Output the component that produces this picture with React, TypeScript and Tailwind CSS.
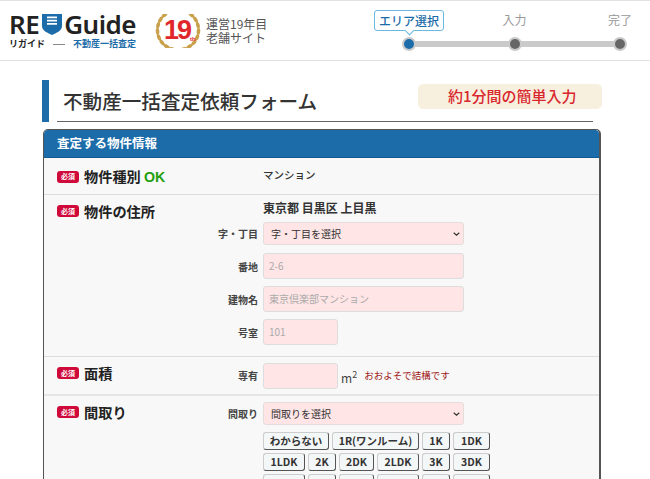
import React from "react";

const FONT = "font-['Noto_Sans_CJK_JP','Noto_Sans',sans-serif]";

const Badge = () => (
  <span className="flex items-center justify-center w-[22px] h-[12px] rounded-[3px] bg-[#cf0a3a] text-white text-[7px] leading-none font-bold shrink-0">
    必須
  </span>
);

const Label = ({ children }: { children: React.ReactNode }) => (
  <div className="flex items-center gap-[5px]">
    <Badge />
    <span className="text-[14.2px] leading-[20px] font-bold text-[#222]">{children}</span>
  </div>
);

const SubLabel = ({ children }: { children: React.ReactNode }) => (
  <div className="w-[219px] pr-[5px] text-right text-[10px] font-bold text-[#444] shrink-0">{children}</div>
);

const Chevron = () => (
  <svg width="7" height="4" viewBox="0 0 7 4" className="absolute right-[3px] top-[9px]">
    <path d="M.7.7l2.8 2.4L6.300.7" fill="none" stroke="#333" strokeWidth="1.2" />
  </svg>
);

const SelectBox = ({ text }: { text: string }) => (
  <div className="relative w-[201px] h-[23px] rounded-[3px] border border-[#e5dcdc] bg-[#ffe5e5] pl-[7px] text-[10px] leading-[21px] text-[#333]">
    {text}
    <Chevron />
  </div>
);

const TextBox = ({ text, wide }: { text?: string; wide?: boolean }) => (
  <div
    className={`${wide ? "w-[201px]" : "w-[75px]"} h-[26px] rounded-[3px] border border-[#ddd] bg-[#ffe5e5] pl-[5px] text-[10px] leading-[24px] text-[#aaa]`}
  >
    {text}
  </div>
);

const Pick = ({ children, className }: { children: React.ReactNode; className: string }) => (
  <div
    className={`${className} h-[18px] text-center rounded-[3px] border border-[#ccc] border-r-[#555] border-b-[#555] bg-[#f3f7f7] text-[10.5px] leading-[16px] font-bold text-[#333] whitespace-nowrap`}
  >
    {children}
  </div>
);

const Step = ({ label, active }: { label: string; active?: boolean }) => (
  <div className="relative flex flex-col items-center w-[14px]">
    {active ? (
      <div className="absolute bottom-[20px] h-[21px] px-[4px] rounded-[3px] border border-[#6cb8e0] bg-white text-[12px] leading-[19px] font-medium text-[#1b6ca8] whitespace-nowrap">
        {label}
        <span className="absolute left-1/2 -bottom-[4px] -ml-[3px] w-[7px] h-[7px] rotate-45 border-r border-b border-[#6cb8e0] bg-white" />
      </div>
    ) : (
      <div className="absolute bottom-[23px] text-[12px] leading-[16px] text-[#999] whitespace-nowrap">{label}</div>
    )}
    <div
      className={`w-[14px] h-[14px] rounded-full border-[2px] border-[#cacaca] ${active ? "bg-[#1b6ca8]" : "bg-[#666]"}`}
    />
  </div>
);

const leaves = [130, 148, 166, 184, 202, 220, 238, 256];

// one side of the laurel, mirrored for the other
const Laurel = ({ flip }: { flip?: boolean }) => (
  <g transform={flip ? "translate(46 0) scale(-1 1)" : undefined}>
    {leaves.map((deg) => {
      const a = (deg * Math.PI) / 180;
      const x = 22 + 19.5 * Math.cos(a);
      const y = 16 - 19.5 * Math.sin(a);
      return (
        <ellipse
          key={deg}
          cx={x}
          cy={y}
          rx="1.8"
          ry="3.4"
          fill="#c9a04c"
          transform={`rotate(${180 - deg} ${x} ${y})`}
        />
      );
    })}
  </g>
);

const row2 = [
  ["1LDK", "w-[42px]"],
  ["2K", "w-[28px]"],
  ["2DK", "w-[35px]"],
  ["2LDK", "w-[42px]"],
  ["3K", "w-[28px]"],
  ["3DK", "w-[37px]"],
];

const row3 = [
  ["3LDK", "w-[42px]"],
  ["4K", "w-[28px]"],
  ["4DK", "w-[35px]"],
  ["4LDK", "w-[42px]"],
  ["5K", "w-[28px]"],
  ["5DK", "w-[37px]"],
];

export default function App() {
  return (
    <div className={`${FONT} w-[650px] h-[479px] overflow-hidden bg-white`}>
      <header className="flex items-center h-[61px] border-y border-[#e2e2e2] pl-[9px]">
        <div className="w-[128px] shrink-0">
          <div className="flex items-center h-[26px] font-['Noto_Sans',sans-serif] text-[26px] leading-none font-semibold tracking-[-0.5px] text-[#222]">
            <span>RE</span>
            <svg width="20" height="21" viewBox="0 0 20 21" className="ml-[3px] mr-[2px]">
              <path d="M0 0h20v12c0 5-6 7-10 9-4-2-10-4-10-9z" fill="#1b6ca8" />
              <path d="M5 2.500h10v1.800H5zM5 5.800h10v1.800H5zM5 9h10v1.800H5z" fill="#fff" />
            </svg>
            <span>Guide</span>
          </div>
          <div className="flex items-center mt-[1px] text-[9px] leading-[12px] font-bold whitespace-nowrap">
            <span className="text-[#222]">リガイド</span>
            <span className="w-[12px] h-px bg-[#888] mx-[8px] shrink-0" />
            <span className="text-[#1b6ca8]">不動産一括査定</span>
          </div>
        </div>
        <div className="relative w-[46px] h-[34px] ml-[18px] shrink-0">
          <svg width="46" height="34" viewBox="0 0 46 34" className="absolute inset-0">
            <Laurel />
            <Laurel flip />
          </svg>
          <span className="absolute left-[9px] top-[3px] font-['Liberation_Sans',sans-serif] text-[27px] leading-[26px] font-bold text-[#e0262b] tracking-[-2px]">19</span>
          <span className="absolute left-[35px] top-[21px] font-['Liberation_Sans',sans-serif] text-[6px] leading-[8px] font-bold text-[#e0262b]">th</span>
        </div>
        <div className="ml-[5px] text-[12px] leading-[14px] text-[#555] whitespace-nowrap">
          <div>運営19年目</div>
          <div>老舗サイト</div>
        </div>
        <div className="relative flex justify-between items-end ml-auto mr-[23px] w-[225px] h-[14px] mt-[26px]">
          <div className="absolute left-[4px] right-[4px] top-[4px] h-[6px] bg-[#cacaca]" />
          <Step label="エリア選択" active />
          <Step label="入力" />
          <Step label="完了" />
        </div>
      </header>

      <main className="w-[560px] ml-[42px] pt-[19px]">
        <div className="relative flex items-center h-[41px]">
          <div className="w-[7px] h-[42px] bg-[#1b6ca8] shrink-0" />
          <h1 className="ml-[14px] text-[19.6px] leading-[28px] font-medium text-[#333]">不動産一括査定依頼フォーム</h1>
          <div className="absolute right-0 top-[4px] w-[184px] h-[25px] rounded-[5px] bg-[#f7f0df] pl-[30px] text-[15px] leading-[24px] font-medium text-[#d9272e] whitespace-nowrap">
            約1分間の簡単入力
          </div>
        </div>
        <div className="ml-[15px] mr-[9px] h-px bg-[#666]" />

        <section className="mt-[7px] ml-px w-[558px] rounded-t-[5px] border border-[#555] border-r-2 bg-[#f8f8f8]">
          <div className="h-[28px] rounded-t-[4px] bg-[#1b6ca8] border-b border-[#125b92] pl-[13px] text-[12.5px] leading-[26px] font-bold text-white">
            査定する物件情報
          </div>

          <div className="flex h-[37px] border-b border-[#ddd] pt-[8px] pl-[13px]">
            <div className="w-[206px]">
              <Label>
                物件種別 <span className="font-['Liberation_Sans',sans-serif] text-[#22a00e]">OK</span>
              </Label>
            </div>
            <span className="text-[10.5px] leading-[18px] font-medium text-[#333]">マンション</span>
          </div>

          <div className="relative border-b border-[#ddd] h-[162px] pt-[5px]">
            <div className="absolute left-[13px] top-[6px]">
              <Label>物件の住所</Label>
            </div>
            <div className="pl-[219px] text-[12px] leading-[16px] font-bold text-[#333] whitespace-nowrap">東京都 目黒区 上目黒</div>
            <div className="flex items-center mt-[6px] h-[23px]">
              <SubLabel>字・丁目</SubLabel>
              <SelectBox text="字・丁目を選択" />
            </div>
            <div className="flex items-center mt-[8px] h-[26px]">
              <SubLabel>番地</SubLabel>
              <TextBox text="2-6" wide />
            </div>
            <div className="flex items-center mt-[7px] h-[26px]">
              <SubLabel>建物名</SubLabel>
              <TextBox text="東京倶楽部マンション" wide />
            </div>
            <div className="flex items-center mt-[7px] h-[26px]">
              <SubLabel>号室</SubLabel>
              <TextBox text="101" />
            </div>
          </div>

          <div className="relative flex items-center h-[39px] border-b-2 border-[#e6e6e6]">
            <div className="absolute left-[13px] top-[6px]">
              <Label>面積</Label>
            </div>
            <SubLabel>専有</SubLabel>
            <TextBox />
            <span className="ml-[3px] mt-[4px] text-[12px] text-[#444]">
              m<sup className="text-[9px]">2</sup>
            </span>
            <span className="ml-[7px] text-[9.500px] text-[#a01818] whitespace-nowrap">おおよそで結構です</span>
          </div>

          <div className="relative pt-[6px] h-[90px]">
            <div className="absolute left-[13px] top-[6px]">
              <Label>間取り</Label>
            </div>
            <div className="flex items-center h-[23px]">
              <SubLabel>間取り</SubLabel>
              <SelectBox text="間取りを選択" />
            </div>
            <div className="pl-[219px] mt-[7px] flex flex-col gap-[3px]">
              <div className="flex gap-[3px]">
                <Pick className="w-[66px]">わからない</Pick>
                <Pick className="w-[87px]">1R(ワンルーム)</Pick>
                <Pick className="w-[28px]">1K</Pick>
                <Pick className="w-[37px]">1DK</Pick>
              </div>
              <div className="flex gap-[3px]">
                {row2.map(([t, w]) => (
                  <Pick key={t} className={w}>{t}</Pick>
                ))}
              </div>
              <div className="flex gap-[3px]">
                {row3.map(([t, w]) => (
                  <Pick key={t} className={w}>{t}</Pick>
                ))}
              </div>
            </div>
          </div>
        </section>
      </main>
    </div>
  );
}
